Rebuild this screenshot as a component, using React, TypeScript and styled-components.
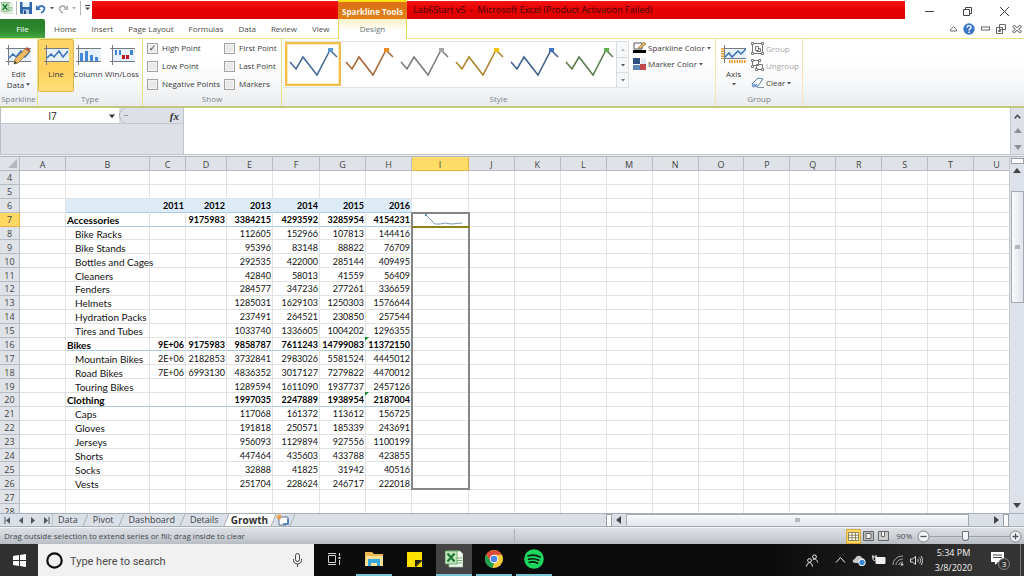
import React from "react";
import styled, { createGlobalStyle, css } from "styled-components";

const GlobalStyle = createGlobalStyle`
  * { box-sizing: border-box; }
  body { margin: 0; background: #fff; }
  button, input { font: inherit; color: inherit; margin: 0; padding: 0; }
  button { border: 0; background: none; cursor: pointer; white-space: nowrap; }
  svg { display: block; flex: none; }
`;

const uiFont = `"Open Sans", "Noto Sans", sans-serif`;

const Shell = styled.div`
  display: flex;
  flex-direction: column;
  height: 100vh;
  min-width: 1000px;
  overflow: hidden;
  font-family: ${uiFont};
  font-size: 8px;
  line-height: 12px;
  color: #3a3a3a;
`;

/* ---------- Title bar ---------- */
const TitleBar = styled.header`
  display: flex;
  height: 19px;
  flex: none;
`;
const QuickAccess = styled.div`
  display: flex;
  align-items: center;
  width: 92px;
  padding: 0 1px 3px;
  gap: 3px;
`;
const QuickActions = styled.div`
  display: flex;
  align-items: center;
  gap: 4px;
`;
const QuickRule = styled.span`
  width: 1px;
  height: 14px;
  background: #b5b5b5;
`;
const RedBand = styled.div`
  display: flex;
  flex: 1;
  margin-top: 1px;
  padding-left: 246px;
  background: linear-gradient(#f41414, #e60000 50%, #dc0000);
`;
const ToolsHeading = styled.div`
  width: 69px;
  margin-top: -1px;
  padding-top: 4px;
  border-top: 2px solid #ffe014;
  background: linear-gradient(#dd7116, #e08018);
  color: #fff8e8;
  font-weight: 700;
  text-align: center;
  white-space: nowrap;
`;
const DocTitle = styled.h1`
  margin: 0;
  padding: 2px 0 0 6px;
  font-size: 9px;
  line-height: 14px;
  font-weight: 400;
  color: #3c0505;
  white-space: pre;
`;
const WindowButtons = styled.div`
  display: flex;
  justify-content: space-between;
  align-items: center;
  width: 119px;
  padding: 4px 15px 0 20px;
`;

/* ---------- Ribbon tabs ---------- */
const TabRow = styled.nav`
  display: flex;
  flex: none;
  height: 19px;
  background: #fff;
`;
const PlainTabs = styled.div`
  display: flex;
  gap: 1px;
  width: 338px;
`;
const Tab = styled.button`
  padding: 0 7px;
  line-height: 20px;
  color: #4c4c4c;
`;
const FileTab = styled(Tab)`
  width: 45px;
  border-radius: 0 2px 0 0;
  background: linear-gradient(#2a7d2a, #2c8a2c 60%, #46a846);
  color: #fff;
  margin-right: 1px;
`;
const DesignTab = styled(Tab)`
  position: relative;
  width: 69px;
  height: 20px;
  border: solid #e5d55c;
  border-width: 0 1px;
  background: linear-gradient(#fbf2c4, #fff 60%);
  color: #6d7278;
`;
const TabTools = styled.div`
  display: flex;
  align-items: center;
  gap: 6px;
  margin-left: auto;
  padding-right: 2px;
`;

/* ---------- Ribbon ---------- */
const Ribbon = styled.section`
  display: flex;
  flex: none;
  height: 70px;
  border-top: 1px solid #ebe68c;
  border-bottom: 2px solid #c3c87e;
  background: linear-gradient(#fff 30%, #f7f8f9 65%, #e9ebee);
`;
const Group = styled.div<{ $w: number; $warm?: boolean }>`
  display: flex;
  flex-direction: column;
  width: ${(p) => p.$w}px;
  border-right: 1px solid ${(p) => (p.$warm ? "#f7e3b4" : "#e6e28a")};
`;
const GroupBody = styled.div`
  display: flex;
  flex: 1;
  min-height: 0;
`;
const GroupName = styled.div`
  height: 13px;
  color: #7b838b;
  text-align: center;
  white-space: nowrap;
`;
const BigButton = styled.button<{ $w: number; $on?: boolean }>`
  display: flex;
  flex-direction: column;
  align-items: center;
  width: ${(p) => p.$w}px;
  height: 53px;
  padding-top: 5px;
  gap: 3px;
  line-height: 11px;
  border: 1px solid transparent;
  ${(p) =>
    p.$on &&
    css`
      border-color: #e3b64c;
      border-radius: 2px;
      background: linear-gradient(#ffd469, #ffd25f 60%, #ffe07a);
    `}
`;
const CheckGrid = styled.div`
  display: grid;
  grid-template-columns: 77px 1fr;
  grid-auto-rows: 18px;
  padding-left: 4px;
`;
const CheckLabel = styled.label`
  display: flex;
  align-items: center;
  gap: 4px;
  white-space: nowrap;
`;
const Check = styled.input`
  appearance: none;
  width: 11px;
  height: 11px;
  border: 1px solid #a3a3a3;
  background: #e9e9e9;
  box-shadow: inset 0 0 0 1px #f4f4f4;
  &:checked::after {
    content: "✓";
    display: block;
    font: 700 9px/9px "DejaVu Sans", sans-serif;
    text-align: center;
    color: #444;
  }
`;
const Gallery = styled.div`
  display: flex;
  height: 47px;
  margin: 2px 0 0 3px;
  border: 1px solid #dfe1e3;
  border-left: 0;
  background: #fff;
`;
const StyleSwatch = styled.button<{ $on?: boolean }>`
  display: grid;
  place-items: center;
  width: 56px;
  height: 44px;
  margin-right: ${(p) => (p.$on ? 0 : -1)}px;
  ${(p) =>
    p.$on &&
    css`
      border: 2px solid #f0bf4e;
      box-shadow: inset 0 0 0 1px #fde9ad;
    `}
`;
const GallerySteps = styled.div`
  display: grid;
  grid-template-rows: 1fr 1fr 1fr;
  width: 12px;
  margin-left: auto;
  background: #f6f7f8;
`;
const Step = styled.button`
  display: grid;
  place-items: center;
  border-left: 1px solid #d9dcdf;
  & + & { border-top: 1px solid #d9dcdf; }
`;
const SmallStack = styled.div<{ $tight?: boolean }>`
  display: flex;
  flex-direction: column;
  padding-top: 1px;
  padding-left: ${(p) => (p.$tight ? 0 : 4)}px;
`;
const SmallButton = styled.button<{ $dim?: boolean; $h: number }>`
  display: flex;
  align-items: center;
  gap: 2px;
  height: ${(p) => p.$h}px;
  color: ${(p) => (p.$dim ? "#a6a6a6" : "#3a3a3a")};
`;

/* ---------- Formula bar ---------- */
const FormulaBar = styled.section`
  display: flex;
  flex: none;
  height: 46px;
  background: #dde1e7;
`;
const NameArea = styled.div`
  width: 184px;
  border-left: 1px solid #b9bec6;
  border-right: 1px solid #bfc4cb;
`;
const NameRow = styled.div`
  display: flex;
  height: 16px;
  border-bottom: 1px solid #c3c8cf;
`;
const NameBox = styled.input`
  width: 103px;
  border: 0;
  outline: 0;
  background: #fff;
  font-size: 10px;
  text-align: center;
  color: #222;
`;
const NameDrop = styled.button`
  display: grid;
  place-items: center;
  width: 15px;
  background: #fff;
`;
const FxPill = styled.div`
  display: flex;
  flex: 1;
  justify-content: space-between;
  align-items: center;
  padding: 0 4px;
  border-left: 1px solid #aab0b8;
  border-radius: 8px 0 0 8px;
`;
const FxButton = styled.button`
  font: italic 700 11px/14px "Liberation Serif", serif;
  color: #333;
`;
const FormulaInput = styled.textarea`
  flex: 1;
  border: 0;
  outline: 0;
  resize: none;
  background: #fff;
`;
const FormulaScroll = styled.div`
  display: flex;
  flex-direction: column;
  align-items: center;
  justify-content: space-between;
  width: 14px;
  padding: 6px 0 3px;
  border-left: 1px solid #c3c8cf;
`;
const Splitter = styled.div`
  flex: none;
  height: 3px;
  border-top: 1px solid #c3c8cf;
  border-bottom: 1px solid #b4b9c0;
  background: #e8ebef;
`;

/* ---------- Worksheet ---------- */
const Sheet = styled.main`
  display: flex;
  flex: 1;
  min-height: 0;
`;
const GridView = styled.div`
  flex: 1;
  min-width: 0;
  overflow: hidden;
`;
const Grid = styled.table`
  width: calc(100% + 11px);
  height: calc(100% + 5px);
  table-layout: fixed;
  border-collapse: separate;
  border-spacing: 0;
  font-family: Lato, sans-serif;
  font-size: 9px;
  line-height: 10px;
  color: #111;
`;
const Corner = styled.td`
  padding: 0 2px 1px 0;
  background: #dfe3e8;
  border: solid #b7bcc4;
  border-width: 0 1px 1px 0;
  svg { margin-left: auto; }
`;
const ColHead = styled.th<{ $on?: boolean }>`
  height: 14px;
  padding: 2px 0 0;
  font: 400 9px/11px ${uiFont};
  color: #444;
  background: ${(p) => (p.$on ? "linear-gradient(#ffd869, #ffe066)" : "#dfe3e8")};
  border: solid ${(p) => (p.$on ? "#e8b04a" : "#b7bcc4")};
  border-width: 0 1px 1px 0;
`;
const RowHead = styled.th<{ $on?: boolean }>`
  padding: 2px 0 0;
  font: 400 9px/10px ${uiFont};
  color: #444;
  background: ${(p) => (p.$on ? "#ffd863" : "#dfe3e8")};
  border: solid ${(p) => (p.$on ? "#e8b04a" : "#b7bcc4")};
  border-width: 0 1px 1px 0;
`;
const Cell = styled.td<{ $bold?: boolean; $band?: boolean; $line?: boolean; $label?: boolean; $flag?: boolean }>`
  padding: 2px 1px 0;
  border: solid #e2e2e2;
  border-width: 0 1px 1px 0;
  text-align: right;
  white-space: nowrap;
  font-weight: ${(p) => (p.$bold ? 700 : 400)};
  ${(p) => p.$bold && "color: #000;"}
  ${(p) => p.$label && `text-align: left; font-size: 10px; padding-left: ${p.$bold ? 1 : 9}px;`}
  ${(p) => p.$line && "border-bottom-color: #a9cbe8;"}
  ${(p) => p.$band && "background: #ddebf7; border-color: #ddebf7 #ddebf7 #a9cbe8;"}
  ${(p) => p.$flag && "position: relative;"}
`;
const SparkCell = styled.td`
  position: relative;
  padding: 0;
`;
const ErrorMark = styled.span`
  position: absolute;
  top: -1px;
  left: -1px;
  border-top: 4px solid #1e8a35;
  border-right: 4px solid transparent;
`;
const FillOutline = styled.div`
  position: absolute;
  z-index: 1;
  top: -1px;
  left: -1px;
  right: -1px;
  height: calc(2000% + 1px);
  border: 2px solid #858585;
  pointer-events: none;
`;
const ActiveEdge = styled.div`
  position: absolute;
  z-index: 2;
  left: 0;
  right: -1px;
  bottom: -1px;
  height: 2px;
  background: #8a8417;
`;
const VScroll = styled.div`
  display: flex;
  flex-direction: column;
  align-items: center;
  width: 15px;
  padding: 1px 1px 4px;
  border-left: 1px solid #c3c8cf;
  background: #dde1e9;
`;
const SplitBox = styled.div<{ $upright?: boolean }>`
  width: ${(p) => (p.$upright ? "6px" : "13px")};
  height: ${(p) => (p.$upright ? "13px" : "6px")};
  border: 1px solid #999fa8;
  background: #fff;
`;
const VThumb = styled.div`
  display: grid;
  place-items: center;
  width: 13px;
  height: 32%;
  margin: 16px 0 auto;
  border: 1px solid #a4aab3;
  background: linear-gradient(90deg, #fafbfc, #dfe3e9);
`;
const UpArrow = styled.div`
  margin-top: 3px;
`;
const Grip = styled.span`
  width: 5px;
  height: 4px;
  background: #b3b8bf;
`;

/* ---------- Sheet tabs ---------- */
const SheetBar = styled.div`
  display: flex;
  flex: none;
  height: 14px;
  border-top: 1px solid #aab0b8;
  border-bottom: 1px solid #aab0b8;
  background: #dbe0e8;
`;
const SheetNav = styled.div`
  display: flex;
  align-items: center;
  gap: 6px;
  width: 53px;
  padding-left: 4px;
  border-right: 1px solid #c3c8cf;
`;
const SheetTab = styled.button<{ $on?: boolean }>`
  padding: 0 4px 0 5px;
  font-size: 9px;
  line-height: 12px;
  color: #3c4048;
  ${(p) => p.$on && "font-weight: 700; font-size: 10px; background: #fff; color: #333; padding: 0 2px;"}
`;
const HScroll = styled.div`
  display: flex;
  align-items: center;
  width: 418px;
  margin-left: auto;
`;
const HThumb = styled.div`
  display: grid;
  place-items: center;
  flex: 1;
  height: 13px;
  margin: 0 23px 0 4px;
  border: 1px solid #a4aab3;
  background: linear-gradient(#f8f9fb, #e2e6ec);
`;

/* ---------- Status bar ---------- */
const StatusBar = styled.footer`
  display: flex;
  align-items: center;
  flex: none;
  height: 17px;
  padding-left: 4px;
  border-top: 1px solid #f2f3f5;
  background: linear-gradient(#dcdfe3, #cfd3d8 50%, #b8bdc3);
  color: #44494f;
`;
const StatusText = styled.span`
  flex: 1;
  white-space: nowrap;
`;
const StatusRest = styled.div`
  display: flex;
  align-items: center;
  justify-content: flex-end;
  width: 50%;
  height: 14px;
  padding-right: 2px;
  border-left: 1px solid #aab0b8;
`;
const ViewButton = styled.button<{ $on?: boolean }>`
  display: grid;
  place-items: center;
  width: 15px;
  height: 15px;
  ${(p) => p.$on && "border: 1px solid #e0a93c; background: #ffd966;"}
`;
const ZoomText = styled.span`
  margin: 0 5px 0 5px;
`;
const ZoomSlider = styled.input`
  appearance: none;
  width: 79px;
  height: 12px;
  background: linear-gradient(#9aa0a7, #9aa0a7) center / 100% 1px no-repeat;
  &::-webkit-slider-thumb {
    appearance: none;
    width: 7px;
    height: 10px;
    border: 1px solid #6d737a;
    border-radius: 1px 1px 4px 4px;
    background: #f6f7f8;
  }
`;

/* ---------- Taskbar ---------- */
const Taskbar = styled.footer`
  display: flex;
  flex: none;
  height: 32px;
  background: linear-gradient(90deg, #0b0b0b 75%, #1b1b1b 85%, #333 95%);
  color: #f1f1f1;
`;
const StartButton = styled.button`
  display: grid;
  place-items: center;
  width: 38px;
  background: #303030;
`;
const SearchBox = styled.label`
  display: flex;
  align-items: center;
  width: 276px;
  padding: 0 10px 0 8px;
  gap: 7px;
  background: #f1f1f1;
`;
const SearchInput = styled.input`
  flex: 1;
  min-width: 0;
  height: 20px;
  border: 0;
  outline: 0;
  padding-top: 2px;
  background: none;
  font: 11px/16px Roboto, sans-serif;
  &::placeholder { color: #4b4b4b; opacity: 1; }
`;
const TaskButton = styled.button<{ $open?: boolean; $on?: boolean }>`
  display: grid;
  place-items: center;
  width: 36px;
  margin: 0 2px;
  background: ${(p) => (p.$on ? "#444" : "none")};
  border: solid transparent;
  border-width: 0 0 2px;
  ${(p) => p.$open && "border-bottom-color: #76c3d3;"}
`;
const Tray = styled.div`
  display: flex;
  align-items: center;
  margin-left: auto;
  padding-right: 3px;
`;
const TrayIcons = styled.div`
  display: flex;
  align-items: center;
  gap: 6px;
`;
const Clock = styled.time`
  width: 61px;
  font-size: 9px;
  line-height: 15px;
  text-align: center;
`;
const NoticeButton = styled.button`
  display: grid;
  place-items: center;
  width: 31px;
`;
const DesktopEdge = styled.span`
  width: 1px;
  height: 32px;
  margin-left: 5px;
  background: #777;
`;

/* ---------- Drawings ---------- */
const Tri = ({ dir = "down", s = 4, c = "#555" }: { dir?: "up" | "down" | "left" | "right"; s?: number; c?: string }) => {
  const d = { down: "M0 2h8L4 7z", up: "M0 6h8L4 1z", left: "M6 0v8L1 4z", right: "M2 0v8l5-4z" }[dir];
  return (
    <svg width={s} height={s} viewBox="0 0 8 8">
      <path d={d} fill={c} />
    </svg>
  );
};

const chartAxes = <path d="M0 3.5h25M2.500 0v20M0 16.500h25" stroke="#747b84" strokeWidth="1" fill="none" />;

const LineIcon = ({ pencil }: { pencil?: boolean }) => (
  <svg width="25" height="20" viewBox="0 0 25 20">
    <rect x="3" y="4" width="22" height="12" fill="#e6f1fc" />
    {chartAxes}
    <path d="M3 13l4-4 3 3 5-6 4 6 5-6" stroke="#3a72b8" strokeWidth="1.500" fill="none" />
    {pencil && (
      <g>
        <path d="M8 19l1-5L20 3l4 3-12 12z" fill="#efba62" stroke="#8a6a35" strokeWidth=".7" />
        <path d="M19 4l2-2 3 2-1 3z" fill="#b0563f" />
        <path d="M8 19l1-3 2 2z" fill="#333" />
      </g>
    )}
  </svg>
);
const ColumnIcon = () => (
  <svg width="25" height="20" viewBox="0 0 25 20">
    <rect x="3" y="4" width="22" height="12" fill="#e6f1fc" />
    {chartAxes}
    <path d="M4 8h3v8H4zM9 6h3v10H9zM14 10h3v6h-3zM19 12h3v4h-3z" fill="#4188d6" />
  </svg>
);
const WinLossIcon = () => (
  <svg width="25" height="20" viewBox="0 0 25 20">
    <rect x="3" y="4" width="22" height="12" fill="#e6f1fc" />
    {chartAxes}
    <path d="M5 5h2v5H5zM9 5h2v5H9zM20 5h3v5h-3z" fill="#3f86d4" />
    <path d="M12 10h3v4h-3zM16 10h3v4h-3z" fill="#c3161c" />
  </svg>
);
const AxisIcon = () => (
  <svg width="25" height="20" viewBox="0 0 25 20">
    <rect x="4" y="4" width="21" height="10" fill="#e6f1fc" />
    <path d="M0 3.500h25M3.500 0v18M0 13.500h25" stroke="#747b84" fill="none" />
    <path d="M4 12l4-4 3 4 6-6 3 3 5-5" stroke="#3a72b8" strokeWidth="1.500" fill="none" />
    <path d="M1.500 3v11M8 16.500h17" stroke="#ef9a2d" strokeWidth="3" strokeDasharray="1.500 1" fill="none" />
  </svg>
);
const SwatchLine = ({ line, dot }: { line: string; dot: string }) => (
  <svg width="50" height="34" viewBox="0 0 50 34">
    <path d="M2 15l6 7 7-12 14 18L42 3l7 7" fill="none" stroke={line} strokeWidth="1.600" />
    <rect x="40" y="1" width="5" height="4" fill={dot} />
  </svg>
);
const PenColorIcon = () => (
  <svg width="13" height="12" viewBox="0 0 13 12">
    <path d="M1 1h8v6H1z" fill="#fff" stroke="#555" />
    <path d="M5 6L11 0l2 2-6 5z" fill="#e5b25e" stroke="#7b6238" strokeWidth=".6" />
    <path d="M0 8h13v3H0z" fill="#000" />
  </svg>
);
const MarkerColorIcon = () => (
  <svg width="13" height="12" viewBox="0 0 13 12">
    <path d="M0 0h7v6H0z" fill="#2c4f7f" />
    <path d="M8 0h5v6H8z" fill="#dfe7f2" />
    <path d="M0 7h7v5H0z" fill="#5c84b5" />
    <path d="M7 6h6v6H7z" fill="#c2484b" />
  </svg>
);
const GroupIcon = ({ apart }: { apart?: boolean }) => (
  <svg width="13" height="13" viewBox="0 0 13 13" fill="none" stroke="#777">
    <path d={apart ? "M1.500 1.500h6v5h-6zM5.500 5.500h6v5h-6z" : "M1.500 1.500h10v10h-10zM4.500 4.500h3v4h-3zM7.500 6.500h2v3h-4"} strokeWidth="1" />
    <g fill="#fff">
      <path d={apart ? "M.5.5h2v2h-2zM7.500.5h2v2h-2zM.5 6.500h2v2h-2zM10.500 9.500h2v2h-2zM4.500 9.500h2v2h-2z" : "M.5.5h2v2h-2zM10.500.5h2v2h-2zM.5 10.500h2v2h-2zM10.500 10.500h2v2h-2z"} />
    </g>
  </svg>
);
const EraserIcon = () => (
  <svg width="13" height="11" viewBox="0 0 13 11">
    <path d="M1 7l6-6 5 1-5 7-5 1z" fill="#f4f8fd" stroke="#4f6f98" strokeWidth=".9" />
    <path d="M1 7l5 0 1 2-5 1z" fill="#7fa8dc" />
    <path d="M6 10.500h7" stroke="#8094ad" />
  </svg>
);
const ExcelIcon = ({ size }: { size: number }) => (
  <svg width={size} height={size} viewBox="0 0 18 18">
    <path d="M4 1h11l3 3v13H4z" fill="#eef6ee" stroke="#9dbf9d" strokeWidth=".8" />
    <path d="M12 8h5M12 10.500h5M12 13h5" stroke="#74b274" />
    <rect x="0" y="1" width="12" height="13" fill="#c4e3bf" stroke="#5da05d" strokeWidth=".8" />
    <path d="M2.500 3.500l7 8M9.500 3.500l-7 8" stroke="#1f7a35" strokeWidth="2.200" />
  </svg>
);
const SaveIcon = () => (
  <svg width="12" height="12" viewBox="0 0 12 12">
    <path d="M0 0h12v12H1L0 11z" fill="#2f66ab" />
    <path d="M2.500 0h7v5h-7z" fill="#eaf3fc" />
    <path d="M3 7.500h6V12H3z" fill="#b9d3ee" />
    <path d="M4 8.500h2V12H4z" fill="#234d83" />
  </svg>
);
const UndoIcon = ({ flip }: { flip?: boolean }) => (
  <svg width="10" height="11" viewBox="0 0 10 11">
    <g transform={flip ? "matrix(-1 0 0 1 10 0)" : undefined}>
      <path d="M2 5c3-4 8-1 6 2-.6 1.600-2 2.500-3 3" fill="none" stroke={flip ? "#b4b4b4" : "#3670bd"} strokeWidth="1.800" />
      <path d="M0 2v5h5z" fill={flip ? "#b4b4b4" : "#3670bd"} />
    </g>
  </svg>
);
const StepArrow = ({ flip, bar }: { flip?: boolean; bar?: boolean }) => (
  <svg width="7" height="7" viewBox="0 0 7 7">
    <g transform={flip ? "matrix(-1 0 0 1 7 0)" : undefined}>
      <path d="M6 0v7L2 3.500z" fill="#4f5660" />
      {bar && <path d="M1 0v7" stroke="#4f5660" />}
    </g>
  </svg>
);
const Slant = ({ left = "#dbe0e8", right = "#dbe0e8" }: { left?: string; right?: string }) => (
  <svg width="6" height="12" viewBox="0 0 6 12">
    <path d="M0 0h6L1 12H0z" fill={left} />
    <path d="M6 0v12H1z" fill={right} />
    <path d="M6 0L1 12" stroke="#9aa1aa" strokeWidth=".8" />
  </svg>
);
const NewSheetIcon = () => (
  <svg width="13" height="12" viewBox="0 0 13 12">
    <path d="M3 3h9v6l-2 2H3z" fill="#fff" stroke="#5c7396" />
    <path d="M12 5v5H7" stroke="#3d6fb5" strokeWidth="1.500" fill="none" />
    <path d="M3 0v6M0 3h6M1 1l4 4M5 1L1 5" stroke="#f0972f" strokeWidth=".9" />
  </svg>
);
const ZoomKnob = ({ plus }: { plus?: boolean }) => (
  <svg width="13" height="13" viewBox="0 0 13 13">
    <circle cx="6.500" cy="6.500" r="5.500" fill="#f1f2f4" stroke="#7c8288" />
    <path d={plus ? "M3.500 6.500h6M6.500 3.500v6" : "M3.500 6.500h6"} stroke="#4d5257" strokeWidth="1.300" />
  </svg>
);
const FolderIcon = () => (
  <svg width="18" height="16" viewBox="0 0 18 16">
    <path d="M0 1h7l2 2h9v12H0z" fill="#e8b94f" />
    <path d="M1 5h17v10H0z" fill="#fbe097" />
    <path d="M3 8h12v7h-3v-3H6v3H3z" fill="#36a8e0" />
  </svg>
);
const NoteIcon = () => (
  <svg width="15" height="15" viewBox="0 0 15 15">
    <path d="M0 0h15v8l-7 7H0z" fill="#ffe100" />
    <path d="M8 15V8h7z" fill="#262309" />
    <path d="M15 9v6H9z" fill="#ffe100" />
  </svg>
);
const ChromeIcon = () => (
  <svg width="18" height="18" viewBox="0 0 18 18">
    <circle cx="9" cy="9" r="9" fill="#fccb3d" />
    <path d="M1.200 4.500A9 9 0 0 1 16.800 4.800H9L5 11z" fill="#e04a3c" />
    <path d="M1.200 4.500L5.300 11 9 13l-1.500 5A9 9 0 0 1 1.200 4.500z" fill="#23a153" />
    <circle cx="9" cy="9" r="4.200" fill="#fff" />
    <circle cx="9" cy="9" r="3.300" fill="#4a86e8" />
  </svg>
);
const SpotifyIcon = () => (
  <svg width="20" height="20" viewBox="0 0 20 20">
    <circle cx="10" cy="10" r="9.800" fill="#1ed760" />
    <path d="M4 7c4-1.300 8.500-.9 12 1.100M4.600 10.300c3.500-1 7-.6 10.200 1M5.200 13.400c3-.8 5.800-.5 8.400.9" fill="none" stroke="#0c1a10" strokeWidth="1.700" strokeLinecap="round" />
  </svg>
);
const TaskViewIcon = () => (
  <svg width="14" height="12" viewBox="0 0 14 12" fill="none" stroke="#d5d5d5">
    <path d="M1.500 2.500h7v7h-7zM1 .5h8M1 11.500h8M12.500 0v3M12.500 7v5" />
    <path d="M11.500 4h2v2h-2z" fill="#d5d5d5" stroke="none" />
  </svg>
);
const PeopleIcon = () => (
  <svg width="12" height="13" viewBox="0 0 12 13" fill="none" stroke="#eee">
    <circle cx="8.500" cy="2.800" r="1.900" />
    <circle cx="3.500" cy="6.500" r="1.900" />
    <path d="M.6 12.500c0-5 5.800-5 5.800 0M6.600 6.300c1.800-2.400 4.900-1 4.900 2.200" />
  </svg>
);

/* ---------- Sheet data ---------- */
const columns = "ABCDEFGHIJKLMNOPQRSTU".split("");
const fixedWidths = [20, 46, 84, 36, 41, 46, 47, 46, 46, 57];

type Row = { kind: "head" | "total" | "item"; label: string; values: string[]; flag?: boolean };
const rows: Record<number, Row> = {
  6: { kind: "head", label: "", values: ["2011", "2012", "2013", "2014", "2015", "2016"] },
  7: { kind: "total", label: "Accessories", values: ["", "9175983", "3384215", "4293592", "3285954", "4154231"] },
  8: { kind: "item", label: "Bike Racks", values: ["", "", "112605", "152966", "107813", "144416"] },
  9: { kind: "item", label: "Bike Stands", values: ["", "", "95396", "83148", "88822", "76709"] },
  10: { kind: "item", label: "Bottles and Cages", values: ["", "", "292535", "422000", "285144", "409495"] },
  11: { kind: "item", label: "Cleaners", values: ["", "", "42840", "58013", "41559", "56409"] },
  12: { kind: "item", label: "Fenders", values: ["", "", "284577", "347236", "277261", "336659"] },
  13: { kind: "item", label: "Helmets", values: ["", "", "1285031", "1629103", "1250303", "1576644"] },
  14: { kind: "item", label: "Hydration Packs", values: ["", "", "237491", "264521", "230850", "257544"] },
  15: { kind: "item", label: "Tires and Tubes", values: ["", "", "1033740", "1336605", "1004202", "1296355"] },
  16: { kind: "total", label: "Bikes", values: ["9E+06", "9175983", "9858787", "7611243", "14799083", "11372150"], flag: true },
  17: { kind: "item", label: "Mountain Bikes", values: ["2E+06", "2182853", "3732841", "2983026", "5581524", "4445012"] },
  18: { kind: "item", label: "Road Bikes", values: ["7E+06", "6993130", "4836352", "3017127", "7279822", "4470012"] },
  19: { kind: "item", label: "Touring Bikes", values: ["", "", "1289594", "1611090", "1937737", "2457126"] },
  20: { kind: "total", label: "Clothing", values: ["", "", "1997035", "2247889", "1938954", "2187004"], flag: true },
  21: { kind: "item", label: "Caps", values: ["", "", "117068", "161372", "113612", "156725"] },
  22: { kind: "item", label: "Gloves", values: ["", "", "191818", "250571", "185339", "243691"] },
  23: { kind: "item", label: "Jerseys", values: ["", "", "956093", "1129894", "927556", "1100199"] },
  24: { kind: "item", label: "Shorts", values: ["", "", "447464", "435603", "433788", "423855"] },
  25: { kind: "item", label: "Socks", values: ["", "", "32888", "41825", "31942", "40516"] },
  26: { kind: "item", label: "Vests", values: ["", "", "251704", "228624", "246717", "222018"] },
};
const rowNumbers = Array.from({ length: 25 }, (_, i) => i + 4);

const swatches = [
  { line: "#4a6c9b", dot: "#5b9bd5" },
  { line: "#a8683a", dot: "#ed8b22" },
  { line: "#7d7d7d", dot: "#a5a5a5" },
  { line: "#ad8530", dot: "#f5c400" },
  { line: "#42618f", dot: "#4472c4" },
  { line: "#5b7d4e", dot: "#5fb04a" },
];
const checks: [string, boolean][] = [
  ["High Point", true],
  ["First Point", false],
  ["Low Point", false],
  ["Last Point", false],
  ["Negative Points", false],
  ["Markers", false],
];

function SheetRow({ n }: { n: number }) {
  const row = rows[n];
  return (
    <tr>
      <RowHead scope="row" $on={n === 7}>{n}</RowHead>
      {columns.map((c, i) => {
        if (c === "I" && n === 7)
          return (
            <SparkCell key={c}>
              <svg width="54" height="12" viewBox="0 0 54 12">
                <path d="M14 1l9 9 5 0 5-1 6 1 11-1" fill="none" stroke="#7e97b8" />
                <rect x="13" y="0" width="2" height="2" fill="#5b8bc9" />
              </svg>
              <FillOutline />
              <ActiveEdge />
            </SparkCell>
          );
        if (!row || i < 1 || i > 7) return <Cell key={c} />;
        const total = row.kind === "total";
        const head = row.kind === "head";
        const flagged = c === "H" && row.flag;
        return (
          <Cell key={c} $bold={total || head} $line={total} $band={head} $label={i === 1} $flag={flagged}>
            {i === 1 ? row.label : row.values[i - 2]}
            {flagged && <ErrorMark />}
          </Cell>
        );
      })}
    </tr>
  );
}

export default function App() {
  return (
    <Shell>
      <GlobalStyle />
      <TitleBar>
        <QuickAccess>
          <ExcelIcon size={12} />
          <QuickRule />
          <QuickActions>
            <button aria-label="Save"><SaveIcon /></button>
            <button aria-label="Undo"><UndoIcon /></button>
            <Tri s={4} />
            <button aria-label="Redo"><UndoIcon flip /></button>
            <Tri s={4} c="#aaa" />
            <QuickRule />
            <button aria-label="Customize toolbar">
              <svg width="5" height="6" viewBox="0 0 5 6"><path d="M0 .5h5" stroke="#444" /><path d="M0 2.500h5L2.500 5z" fill="#444" /></svg>
            </button>
          </QuickActions>
        </QuickAccess>
        <RedBand>
          <ToolsHeading>Sparkline Tools</ToolsHeading>
          <DocTitle>{"Lab6Start v5  -  Microsoft Excel (Product Activation Failed)"}</DocTitle>
        </RedBand>
        <WindowButtons>
          <button aria-label="Minimize"><svg width="9" height="9" viewBox="0 0 9 9"><path d="M0 4.500h9" stroke="#444" /></svg></button>
          <button aria-label="Restore"><svg width="9" height="9" viewBox="0 0 9 9" fill="none" stroke="#444"><path d="M.5 2.500h6v6h-6zM2.500 2V.5h6v6H7" /></svg></button>
          <button aria-label="Close"><svg width="9" height="9" viewBox="0 0 9 9"><path d="M0 0l9 9M9 0L0 9" stroke="#444" /></svg></button>
        </WindowButtons>
      </TitleBar>

      <TabRow>
        <PlainTabs>
          <FileTab>File</FileTab>
          {["Home", "Insert", "Page Layout", "Formulas", "Data", "Review", "View"].map((t) => (
            <Tab key={t}>{t}</Tab>
          ))}
        </PlainTabs>
        <DesignTab>Design</DesignTab>
        <TabTools>
          <button aria-label="Collapse ribbon"><svg width="7" height="6" viewBox="0 0 7 6"><path d="M.5 3.500L3.500.7l3 2.800v1.500h-6z" fill="none" stroke="#666" /></svg></button>
          <button aria-label="Help">
            <svg width="12" height="12" viewBox="0 0 12 12"><circle cx="6" cy="6" r="5.700" fill="#3b75c3" /><path d="M4 4.600c0-2.600 4-2.600 4-.2C8 6 6 5.800 6 7.400M6 8.600v1.400" fill="none" stroke="#fff" strokeWidth="1.400" /></svg>
          </button>
          <button aria-label="Minimize workbook"><svg width="9" height="5" viewBox="0 0 9 5"><rect x=".5" y="1" width="8" height="3" fill="#fff" stroke="#666" /></svg></button>
          <button aria-label="Restore workbook"><svg width="10" height="10" viewBox="0 0 10 10" fill="#fff" stroke="#666"><path d="M3.500.5h6v5h-6zM.5 3.500h6v6h-6zM2.500 6.500h2v1h-2z" /></svg></button>
          <button aria-label="Close workbook"><svg width="10" height="8" viewBox="0 0 10 8"><path d="M1 .5l8 7M9 .5l-8 7" stroke="#666" strokeWidth="3" /><path d="M1.500 1l7 6M8.500 1l-7 6" stroke="#fff" strokeWidth="1.200" /></svg></button>
        </TabTools>
      </TabRow>

      <Ribbon>
        <Group $w={38}>
          <GroupBody>
            <BigButton $w={37}>
              <LineIcon pencil />
              <span>Edit<br />Data <svg style={{ display: "inline" }} width="4" height="5" viewBox="0 0 4 5"><path d="M0 0h4L2 3z" fill="#666" /></svg></span>
            </BigButton>
          </GroupBody>
          <GroupName>Sparkline</GroupName>
        </Group>
        <Group $w={105}>
          <GroupBody>
            <BigButton $w={36} $on><LineIcon />Line</BigButton>
            <BigButton $w={28}><ColumnIcon />Column</BigButton>
            <BigButton $w={40}><WinLossIcon />Win/Loss</BigButton>
          </GroupBody>
          <GroupName>Type</GroupName>
        </Group>
        <Group $w={139}>
          <GroupBody>
            <CheckGrid>
              {checks.map(([label, on]) => (
                <CheckLabel key={label}><Check type="checkbox" defaultChecked={on} />{label}</CheckLabel>
              ))}
            </CheckGrid>
          </GroupBody>
          <GroupName>Show</GroupName>
        </Group>
        <Group $w={434} $warm>
          <GroupBody>
            <Gallery>
              {swatches.map((s, i) => (
                <StyleSwatch key={s.line} $on={i === 0} aria-label={`Sparkline style ${i + 1}`}><SwatchLine {...s} /></StyleSwatch>
              ))}
              <GallerySteps>
                <Step aria-label="Previous styles"><Tri dir="up" c="#b5b8bb" /></Step>
                <Step aria-label="Next styles"><Tri /></Step>
                <Step aria-label="More styles"><Tri c="#777" /></Step>
              </GallerySteps>
            </Gallery>
            <SmallStack>
              <SmallButton $h={16}><PenColorIcon />Sparkline Color <Tri /></SmallButton>
              <SmallButton $h={16}><MarkerColorIcon />Marker Color <Tri /></SmallButton>
            </SmallStack>
          </GroupBody>
          <GroupName>Style</GroupName>
        </Group>
        <Group $w={87} $warm>
          <GroupBody>
            <BigButton $w={35}><AxisIcon />Axis<Tri /></BigButton>
            <SmallStack $tight>
              <SmallButton $h={17} $dim><GroupIcon />Group</SmallButton>
              <SmallButton $h={17} $dim><GroupIcon apart />Ungroup</SmallButton>
              <SmallButton $h={17}><EraserIcon />Clear <Tri /></SmallButton>
            </SmallStack>
          </GroupBody>
          <GroupName>Group</GroupName>
        </Group>
      </Ribbon>

      <FormulaBar>
        <NameArea>
          <NameRow>
            <NameBox aria-label="Name box" defaultValue="I7" />
            <NameDrop aria-label="Named ranges"><Tri s={6} c="#333" /></NameDrop>
            <FxPill>
              <svg width="4" height="4" viewBox="0 0 4 4"><path d="M0 1.500h4" stroke="#999" /></svg>
              <FxButton aria-label="Insert function">fx</FxButton>
            </FxPill>
          </NameRow>
        </NameArea>
        <FormulaInput aria-label="Formula" />
        <FormulaScroll>
          <svg width="7" height="5" viewBox="0 0 7 5"><path d="M.7 4.300l2.800-3 2.800 3" fill="none" stroke="#444" strokeWidth="1.600" /></svg>
          <Tri dir="up" s={8} c="#8b919a" />
          <Tri s={8} c="#8b919a" />
        </FormulaScroll>
      </FormulaBar>
      <Splitter />

      <Sheet>
        <GridView>
          <Grid>
            <colgroup>
              {fixedWidths.map((w, i) => <col key={i} width={w} />)}
              {columns.slice(9).map((c) => <col key={c} />)}
            </colgroup>
            <thead>
              <tr>
                <Corner><svg width="9" height="9" viewBox="0 0 9 9"><path d="M9 0v9H0z" fill="#b3b8c0" /></svg></Corner>
                {columns.map((c) => <ColHead key={c} scope="col" $on={c === "I"}>{c}</ColHead>)}
              </tr>
            </thead>
            <tbody>
              {rowNumbers.map((n) => <SheetRow key={n} n={n} />)}
            </tbody>
          </Grid>
        </GridView>
        <VScroll>
          <SplitBox />
          <UpArrow><Tri dir="up" s={8} c="#444" /></UpArrow>
          <VThumb><Grip /></VThumb>
          <Tri s={8} c="#444" />
        </VScroll>
      </Sheet>

      <SheetBar>
        <SheetNav>
          <button aria-label="First sheet"><StepArrow bar /></button>
          <button aria-label="Previous sheet"><StepArrow /></button>
          <button aria-label="Next sheet"><StepArrow flip /></button>
          <button aria-label="Last sheet"><StepArrow flip bar /></button>
        </SheetNav>
        <SheetTab>Data</SheetTab><Slant />
        <SheetTab>Pivot</SheetTab><Slant />
        <SheetTab>Dashboard</SheetTab><Slant />
        <SheetTab>Details</SheetTab><Slant right="#fff" />
        <SheetTab $on>Growth</SheetTab><Slant left="#fff" />
        <button aria-label="Insert worksheet"><NewSheetIcon /></button>
        <Slant />
        <HScroll>
          <SplitBox $upright />
          <svg width="10" height="8" viewBox="0 0 10 8"><path d="M9 0v8L4 4z" fill="#444" /></svg>
          <HThumb><Grip /></HThumb>
          <Tri dir="right" s={8} c="#444" />
          <svg width="3" height="8" viewBox="0 0 3 8" />
          <SplitBox $upright />
          <svg width="15" height="8" viewBox="0 0 15 8" />
        </HScroll>
      </SheetBar>

      <StatusBar>
        <StatusText>Drag outside selection to extend series or fill; drag inside to clear</StatusText>
        <StatusRest>
          <ViewButton $on aria-label="Normal view"><svg width="11" height="9" viewBox="0 0 11 9" fill="#fff" stroke="#77683c"><path d="M.5.5h10v8H.5zM.5 3.200h10M.5 5.800h10M4 .5v8M7.500.5v8" strokeWidth=".8" /></svg></ViewButton>
          <ViewButton aria-label="Page layout view"><svg width="11" height="10" viewBox="0 0 11 10" stroke="#666"><path d="M.5.5h10v9H.5z" fill="#bbb" /><path d="M3 2.500h5v5H3z" fill="#eee" /></svg></ViewButton>
          <ViewButton aria-label="Page break view"><svg width="11" height="10" viewBox="0 0 11 10" stroke="#666"><path d="M.5.5h10v9H.5z" fill="#ccc" /><path d="M3.500.5h3v5h-3z" fill="#fff" /></svg></ViewButton>
          <ZoomText>90%</ZoomText>
          <button aria-label="Zoom out"><ZoomKnob /></button>
          <ZoomSlider type="range" aria-label="Zoom" min={0} max={100} defaultValue={44} />
          <button aria-label="Zoom in"><ZoomKnob plus /></button>
        </StatusRest>
      </StatusBar>

      <Taskbar>
        <StartButton aria-label="Start"><svg width="13" height="13" viewBox="0 0 13 13" fill="#fff"><path d="M0 2l6-1v5H0zM7 1l6-1v6H7zM0 7h6v5l-6-1zM7 7h6v6l-6-1z" /></svg></StartButton>
        <SearchBox>
          <svg width="17" height="17" viewBox="0 0 17 17"><circle cx="8.500" cy="8.500" r="7.200" fill="none" stroke="#111" strokeWidth="2.200" /></svg>
          <SearchInput aria-label="Search" placeholder="Type here to search" />
          <svg width="13" height="14" viewBox="0 0 13 14" fill="none" stroke="#444"><rect x="4.500" y=".5" width="4" height="8" rx="2" /><path d="M2.500 6v1.500c0 4.500 8 4.500 8 0V6M6.500 11v3" /></svg>
        </SearchBox>
        <TaskButton aria-label="Task view"><TaskViewIcon /></TaskButton>
        <TaskButton $open aria-label="File Explorer"><FolderIcon /></TaskButton>
        <TaskButton aria-label="Sticky Notes"><NoteIcon /></TaskButton>
        <TaskButton $open $on aria-label="Excel"><ExcelIcon size={18} /></TaskButton>
        <TaskButton $open aria-label="Chrome"><ChromeIcon /></TaskButton>
        <TaskButton $open aria-label="Spotify"><SpotifyIcon /></TaskButton>
        <Tray>
          <TrayIcons>
            <PeopleIcon />
            <svg width="22" height="8" viewBox="0 0 22 8"><path d="M12 6.500l4.500-5 4.500 5" fill="none" stroke="#eee" /></svg>
            <svg width="14" height="12" viewBox="0 0 14 12"><path d="M3 9C0 9 0 5 3 5c1-4 6-4 7-1 3 0 4 5 1 5z" fill="#c9c9c9" /><circle cx="10" cy="8.500" r="3.300" fill="#3b87d0" stroke="#fff" /></svg>
            <svg width="14" height="10" viewBox="0 0 14 10"><path d="M4 2.500h9v6H4z" fill="#eee" stroke="#eee" /><path d="M0 2h5M1 0v4c0 2 3 2 3 0V0" stroke="#eee" fill="none" /></svg>
            <svg width="12" height="11" viewBox="0 0 12 11" fill="none" stroke="#aaa"><path d="M1 10C1 5 5 1 11 1M4 10c0-3 3-6 7-6M7 10c0-2 2-3 4-3" /><circle cx="10" cy="9.500" r="1" fill="#eee" /></svg>
            <svg width="13" height="11" viewBox="0 0 13 11" fill="none" stroke="#ddd"><path d="M.5 4v3h2L5.500 9.500v-8L2.500 4zM7.500 4c1 1 1 2 0 3M9.300 2.500c2 2 2 4 0 6M11 1c2.200 3 2.200 6 0 9" /></svg>
          </TrayIcons>
          <Clock>5:34 PM<br />3/8/2020</Clock>
          <NoticeButton aria-label="3 notifications">
            <svg width="20" height="20" viewBox="0 0 20 20">
              <path d="M1 2h13v10H8l-3 3v-3H1z" fill="#fff" />
              <path d="M3 5h9M3 7.500h9" stroke="#444" />
              <circle cx="14" cy="14" r="5.500" fill="#333" stroke="#888" />
              <text x="14" y="17" fontSize="8" textAnchor="middle" fill="#fff">3</text>
            </svg>
          </NoticeButton>
          <DesktopEdge />
        </Tray>
      </Taskbar>
    </Shell>
  );
}
